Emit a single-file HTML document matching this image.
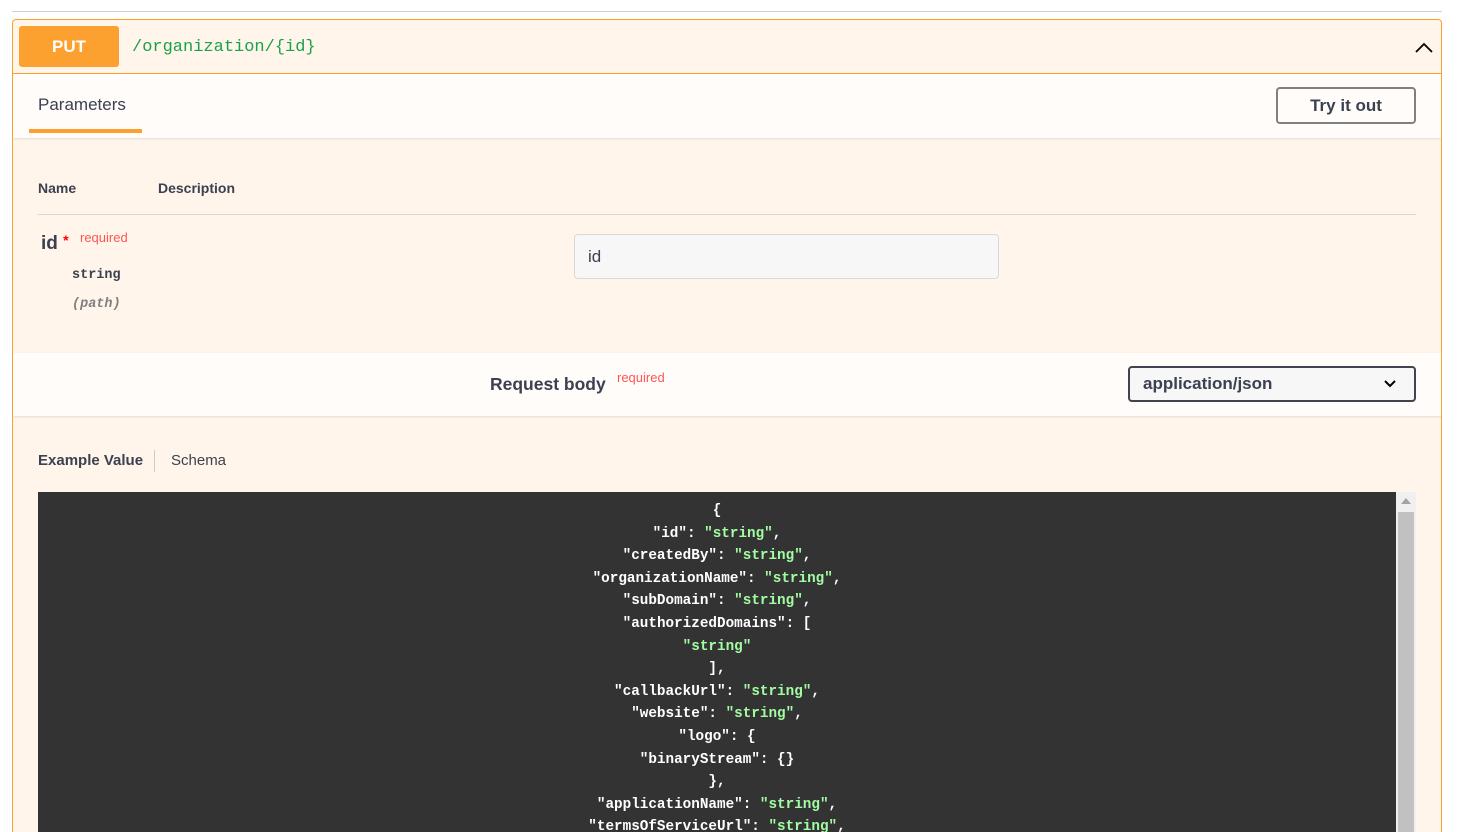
<!DOCTYPE html>
<html style="height:832px;overflow:hidden"><head><meta charset="utf-8"><style>
*{box-sizing:border-box;margin:0;padding:0}
body{width:1479px;height:832px;overflow:hidden;background:#fff;font-family:"Liberation Sans",sans-serif;color:#3b4151;position:relative}
.topline{position:absolute;left:12px;top:11px;width:1430px;height:1px;background:#d0d0d0}
.op{position:absolute;left:12px;top:19px;width:1430px;height:813px;border:1px solid #fca130;border-bottom:none;border-radius:4px 4px 0 0;background:#fff5ea;overflow:hidden}
.hdr{height:54px;border-bottom:1px solid #fca130;position:relative}
.put{position:absolute;left:6px;top:6px;width:100px;height:41px;background:#fca130;border-radius:3px;color:#fff;font-weight:bold;font-size:17px;text-align:center;line-height:41px}
.path{position:absolute;left:119px;top:18px;font-family:"Liberation Mono",monospace;font-size:17px;color:#18a34a}
.tabs{height:64px;background:#fffcf9;position:relative;box-shadow:0 1px 2px rgba(0,0,0,.1)}
.tab{position:absolute;left:25px;top:21px;font-size:17px;color:#3b4151}
.tabu{position:absolute;left:16px;top:55px;width:113px;height:4px;background:#fca130}
.try{position:absolute;left:1263px;top:13px;width:140px;height:37px;border:2px solid #808080;border-radius:4px;font-weight:bold;font-size:17px;text-align:center;line-height:33px;background:transparent}
.th{position:absolute;top:160px;font-size:14px;font-weight:bold}
.rule{position:absolute;left:25px;top:194px;width:1378px;height:1px;background:#d8d8d8}
.rb{position:absolute;left:0;top:333px;width:1430px;height:63px;background:#fffcf9;box-shadow:0 1px 2px rgba(0,0,0,.1)}
.sel{position:absolute;left:1115px;top:13px;width:288px;height:36px;border:2px solid #41444e;border-radius:4px;background:#f7f7f7;font-weight:bold;font-size:17px;padding-left:13px;line-height:31px}
.code{position:absolute;left:25px;top:472px;width:1358px;height:341px;overflow:hidden;background:#333;color:#fff;font-family:"Liberation Mono",monospace;font-weight:bold;font-size:14.3px;line-height:22.6px;text-align:center;padding-top:8px;white-space:pre}
.s{color:#a2fca2}
.sb{position:absolute;left:1383px;top:472px;width:20px;height:341px;overflow:hidden;background:#f0f0f0}
</style></head><body>
<div class="topline"></div>
<div class="op">
 <div class="hdr"><div class="put">PUT</div><div class="path">/organization/{id}</div>
  <svg style="position:absolute;left:1401px;top:21px" width="20" height="14" viewBox="0 0 20 14"><path d="M2 11 L10 3 L18 11" fill="none" stroke="#000" stroke-width="1.8"/></svg></div>
 <div class="tabs"><div class="tab">Parameters</div><div class="tabu"></div><div class="try">Try it out</div></div>
 <div class="th" style="left:25px">Name</div><div class="th" style="left:145px">Description</div>
 <div class="rule"></div>
 <div style="position:absolute;left:28px;top:213px;font-size:19px;font-weight:bold">id <span style="color:red;font-size:14px;position:relative;top:-4px">*</span></div>
 <div style="position:absolute;left:67px;top:210px;font-size:13px;color:#f55">required</div>
 <div style="position:absolute;left:59px;top:248px;font-family:'Liberation Mono',monospace;font-weight:bold;font-size:13.5px">string</div>
 <div style="position:absolute;left:59px;top:277px;font-family:'Liberation Mono',monospace;font-weight:bold;font-style:italic;font-size:13.5px;color:#808080">(path)</div>
 <div style="position:absolute;left:561px;top:214px;width:425px;height:45px;border:1px solid #d9d9d9;border-radius:4px;background:#f7f7f7;font-size:17px;padding-left:13px;line-height:43px">id</div>
 <div class="rb">
  <div style="position:absolute;left:477px;top:21px;font-size:17.5px;font-weight:bold">Request body</div>
  <div style="position:absolute;left:604px;top:17px;font-size:13px;color:#f55">required</div>
  <div class="sel">application/json<svg style="position:absolute;right:17px;top:11px" width="14" height="10" viewBox="0 0 14 10"><path d="M2 2 L7 7 L12 2" fill="none" stroke="#000" stroke-width="2"/></svg></div>
 </div>
 <div style="position:absolute;left:25px;top:432px;font-size:15px;font-weight:bold">Example Value</div>
 <div style="position:absolute;left:141px;top:430px;width:1px;height:22px;background:#ccc"></div>
 <div style="position:absolute;left:158px;top:432px;font-size:15px">Schema</div>
 <div class="code">{
"id": <span class="s">"string"</span>,
"createdBy": <span class="s">"string"</span>,
"organizationName": <span class="s">"string"</span>,
"subDomain": <span class="s">"string"</span>,
"authorizedDomains": [
<span class="s">"string"</span>
],
"callbackUrl": <span class="s">"string"</span>,
"website": <span class="s">"string"</span>,
"logo": {
"binaryStream": {}
},
"applicationName": <span class="s">"string"</span>,
"termsOfServiceUrl": <span class="s">"string"</span>,</div>
 <div class="sb"><svg style="position:absolute;left:5px;top:6px" width="10" height="6"><path d="M0 6 L5 0 L10 6Z" fill="#a3a3a3"/></svg><div style="position:absolute;left:2px;top:20px;width:16px;height:380px;background:#c1c1c1"></div></div>
</div>
</body></html>
